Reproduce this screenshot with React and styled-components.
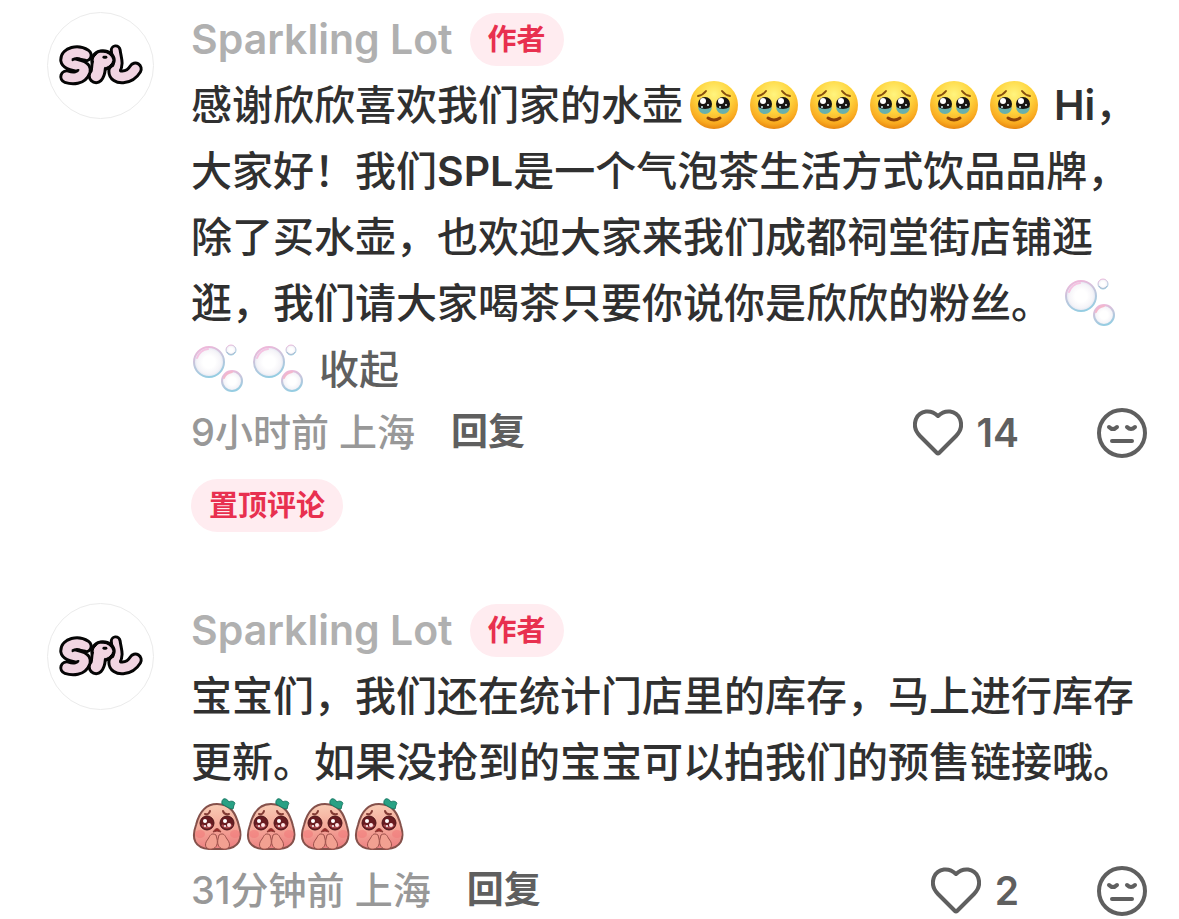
import React from "react";
import styled, { createGlobalStyle } from "styled-components";

const GlobalStyle = createGlobalStyle`
  * { box-sizing: border-box; }
  body {
    margin: 0;
    background: #fff;
    color: #303030;
    font-family: Inter, "Noto Sans CJK SC", sans-serif;
    font-weight: 500;
  }
`;

const Page = styled.main`
  display: flex;
  flex-direction: column;
  gap: 71px;
  padding: 12px 32px 0 47px;
`;

const Comment = styled.article`
  display: grid;
  grid-template-columns: 107px minmax(0, 1fr);
  column-gap: 37px;
  align-items: start;
`;

const Avatar = styled.a`
  display: block;
  height: 107px;
  border: 1px solid #ebebeb;
  border-radius: 50%;
  overflow: hidden;
  svg { display: block; width: 105px; height: 105px; }
`;

const Header = styled.header`
  display: flex;
  align-items: center;
  gap: 17px;
  height: 54px;
  margin-bottom: 6px;
`;

const UserName = styled.a`
  color: #b0b0b0;
  font-size: 41px;
  font-weight: 600;
  line-height: 54px;
  text-decoration: none;
`;

const Tag = styled.span`
  display: inline-block;
  padding: 0 18px;
  border-radius: 27px;
  background: #ffecf0;
  color: #e8304f;
  font-size: 29px;
  font-weight: 700;
  line-height: 53px;
`;

const Body = styled.p`
  margin: 0;
  font-size: 41px;
  line-height: 66px;
`;

const Latin = styled.span`
  font-weight: 600;
`;

const TextButton = styled.button`
  padding: 0;
  border: 0;
  background: none;
  color: #5f5f5f;
  font: inherit;
  font-size: ${(p) => p.$size};
  font-weight: ${(p) => p.$weight};
  cursor: pointer;
`;

const Collapse = styled(TextButton)`
  margin-left: 8px;
`;

const Footer = styled.footer`
  display: flex;
  align-items: center;
  height: 58px;
  color: #5f5f5f;
`;

const MetaGroup = styled.div`
  display: flex;
  align-items: center;
  gap: 36px;
  padding-bottom: 6px;
`;

const Meta = styled.span`
  color: #989898;
  font-size: 38px;
`;

const Actions = styled.div`
  display: flex;
  align-items: center;
  gap: 78px;
  margin-left: auto;
  padding-top: 2px;
`;

const IconButton = styled.button`
  display: flex;
  align-items: center;
  gap: 14px;
  padding: 0;
  border: 0;
  background: none;
  color: inherit;
  font: inherit;
  font-size: 39px;
  font-weight: 600;
  line-height: 50px;
  cursor: pointer;
  svg { display: block; }
`;

const Pinned = styled.div`
  display: flex;
  margin-top: 18px;
`;

const Emoji = styled.svg`
  width: ${(p) => p.$width};
  height: 56px;
  vertical-align: ${(p) => p.$drop || "-14px"};
`;

function Logo() {
  const s = "M38 43 C30 38 19 41 19 48 C20 54 38 52 37 59 C34 67 25 67 19 65";
  const l = "M69 38 C70 46 73 52 69 58";
  const foot = "M68 59 C68 68 83 67 89 57";
  const stem = "M49 64 C53 60 50 52 54 46";
  return (
    <svg viewBox="0 0 107 107" aria-hidden="true">
      <g fill="none" strokeLinecap="round" strokeLinejoin="round">
        <g stroke="#050505">
          <path d={l} strokeWidth="12" />
          <path d={foot} strokeWidth="15" />
        </g>
        <g stroke="#f1d5e2">
          <path d={l} strokeWidth="6" />
          <path d={foot} strokeWidth="9" />
        </g>
        <g stroke="#050505">
          <path d={stem} strokeWidth="17" />
          <ellipse cx="56" cy="48" rx="12" ry="10" strokeWidth="2" fill="#050505" />
          <path d={s} strokeWidth="15" />
        </g>
        <g stroke="#f1d5e2">
          <path d={stem} strokeWidth="11" />
          <ellipse cx="56" cy="48" rx="9" ry="7" fill="#f1d5e2" strokeWidth="1" />
          <path d={s} strokeWidth="9" />
        </g>
        <g stroke="#050505">
          <path d="M57 45 L59 45" strokeWidth="3" />
          <path d="M39 48 C34 47 29 45 25 48" strokeWidth="2" />
          <path d="M19 59 C24 60 28 60 31 58" strokeWidth="2" />
        </g>
      </g>
    </svg>
  );
}

function TearyFace() {
  return (
    <Emoji $width="60px" viewBox="0 0 60 56" role="img" aria-label="感动">
      <defs>
        <radialGradient id="face" cx="50%" cy="28%" r="72%">
          <stop offset="0" stopColor="#fff47e" />
          <stop offset="0.5" stopColor="#ffd53f" />
          <stop offset="0.85" stopColor="#f9a91f" />
          <stop offset="1" stopColor="#e68612" />
        </radialGradient>
      </defs>
      <circle cx="31" cy="27" r="24" fill="url(#face)" />
      <g fill="none" stroke="#87500f" strokeWidth="2" strokeLinecap="round">
        <path d="M15 18 Q20 17 23 13" />
        <path d="M47 18 Q42 17 39 13" />
        <path d="M25 40 Q31 44 37 40" stroke="#8c4308" strokeWidth="3" />
      </g>
      {[22, 40].map((x) => (
        <g key={x}>
          <circle cx={x} cy="26" r="7" fill="#171412" />
          <path d={`M${x - 7} 29 Q${x} 33 ${x + 7} 29 Q${x + 6} 36 ${x} 36 Q${x - 6} 36 ${x - 7} 29`} fill="#68b0ac" />
          <circle cx={x - 2} cy="23" r="3" fill="#fff" />
          <circle cx={x + 3} cy="27" r="1" fill="#e8f6f8" />
          <circle cx={x - 3} cy="29" r="1" fill="#d4eff3" />
        </g>
      ))}
    </Emoji>
  );
}

function Bubbles() {
  return (
    <Emoji $width="60px" viewBox="0 0 60 56" role="img" aria-label="泡泡">
      <defs>
        <linearGradient id="rim" x1="0.3" y1="0" x2="0.6" y2="1">
          <stop offset="0" stopColor="#f0b7da" />
          <stop offset="0.45" stopColor="#c3c6dc" />
          <stop offset="1" stopColor="#94cde2" />
        </linearGradient>
        <radialGradient id="film">
          <stop offset="0.4" stopColor="#fff" />
          <stop offset="0.8" stopColor="#f5f4f8" />
          <stop offset="1" stopColor="#dfe4f0" />
        </radialGradient>
      </defs>
      <g fill="url(#film)" stroke="url(#rim)">
        <circle cx="18" cy="20" r="15" strokeWidth="2" />
        <circle cx="41" cy="39" r="10" strokeWidth="2" />
        <circle cx="40" cy="8" r="5" strokeWidth="1" />
      </g>
      <path d="M6 16 Q9 8 17 7" fill="none" stroke="#f5c3e2" strokeWidth="2" strokeLinecap="round" />
      <path d="M33 36 Q35 31 41 30" fill="none" stroke="#f4b7cb" strokeWidth="2" strokeLinecap="round" />
      <path d="M36 10 Q40 15 44 10" fill="none" stroke="#abbdd2" strokeWidth="1" />
    </Emoji>
  );
}

function PeachFace() {
  return (
    <Emoji $width="54px" $drop="-10px" viewBox="0 0 54 56" role="img" aria-label="拜托">
      <defs>
        <linearGradient id="peach" x1="0.4" y1="0" x2="0.5" y2="1">
          <stop offset="0" stopColor="#f8ccb5" />
          <stop offset="0.5" stopColor="#f5aa9a" />
          <stop offset="1" stopColor="#ec7e80" />
        </linearGradient>
      </defs>
      <path d="M26 7 C14 7 8 16 5 28 C0 42 4 51 18 52 H34 C48 51 52 42 48 29 C45 17 40 7 26 7Z" fill="url(#peach)" stroke="#85514b" strokeWidth="2" />
      <path d="M31 7 C30 1 35 0 38 5 C40 3 46 5 43 8 L42 12 C38 12 35 9 31 7Z" fill="#28a184" stroke="#197964" strokeWidth="1" />
      <ellipse cx="9" cy="37" rx="5" ry="4" fill="#f27c7b" opacity="0.6" />
      <ellipse cx="44" cy="37" rx="5" ry="4" fill="#f27c7b" opacity="0.6" />
      <g fill="none" stroke="#823a33" strokeWidth="2" strokeLinecap="round">
        <path d="M14 17 Q18 18 19 14" />
        <path d="M38 17 Q33 18 32 14" />
      </g>
      {[16, 36].map((x) => (
        <g key={x}>
          <circle cx={x} cy="26" r="7" fill="#681c21" stroke="#4c1519" strokeWidth="1" />
          <path d={`M${x - 5} 28 Q${x} 33 ${x + 5} 28`} fill="none" stroke="#a94b50" strokeWidth="2" />
          <circle cx={x - 2} cy="24" r="2" fill="#fff" />
          <circle cx={x + 2} cy="28" r="2" fill="#ffe5e5" />
          <circle cx={x - 2} cy="29" r="1" fill="#fff" />
        </g>
      ))}
      <path d="M22 35 Q26 28 30 35 Q26 33 22 35Z" fill="#9d2929" stroke="#8c3934" strokeWidth="1" />
      <path d="M25 38 C20 35 19 39 17 42 C12 48 15 53 21 52 C26 51 27 46 26 42Z" fill="#f2a091" stroke="#9b504a" strokeWidth="1" />
      <path d="M28 38 C33 35 34 39 36 42 C41 48 38 53 32 52 C27 51 26 46 27 42Z" fill="#f2a091" stroke="#9b504a" strokeWidth="1" />
    </Emoji>
  );
}

function Heart() {
  return (
    <svg width="50" height="48" viewBox="0 0 50 48" fill="none" stroke="currentColor" strokeWidth="4" strokeLinejoin="round" aria-hidden="true">
      <path d="M25 7 C18 0 7 1 3 10 C0 18 3 23 7 27 L24 44 Q25 45 26 44 L43 27 C47 23 50 18 47 10 C43 1 32 0 25 7Z" />
    </svg>
  );
}

function Dislike() {
  return (
    <svg width="50" height="50" viewBox="0 0 50 50" fill="none" stroke="currentColor" strokeWidth="4" strokeLinecap="round" aria-hidden="true">
      <circle cx="25" cy="25" r="23" />
      <path d="M12 19 Q16 23 20 19 M30 19 Q34 23 38 19" />
      <path d="M15 33 H35" />
    </svg>
  );
}

const times = (n, Item) => Array.from({ length: n }, (_, i) => <Item key={i} />);

function CommentItem({ meta, likes, pinned, children }) {
  return (
    <Comment>
      <Avatar href="#profile" aria-label="Sparkling Lot">
        <Logo />
      </Avatar>
      <div>
        <Header>
          <UserName href="#profile">Sparkling Lot</UserName>
          <Tag>作者</Tag>
        </Header>
        <Body>{children}</Body>
        <Footer>
          <MetaGroup>
            <Meta>{meta}</Meta>
            <TextButton type="button" $size="37px" $weight={700}>回复</TextButton>
          </MetaGroup>
          <Actions>
            <IconButton type="button">
              <Heart />
              {likes}
            </IconButton>
            <IconButton type="button" aria-label="不喜欢">
              <Dislike />
            </IconButton>
          </Actions>
        </Footer>
        {pinned && (
          <Pinned>
            <Tag>置顶评论</Tag>
          </Pinned>
        )}
      </div>
    </Comment>
  );
}

export default function App() {
  return (
    <>
      <GlobalStyle />
      <Page lang="zh-CN">
        <CommentItem meta="9小时前 上海" likes={14} pinned>
          感谢欣欣喜欢我们家的水壶{times(6, TearyFace)} <Latin>Hi</Latin>，大家好！我们<Latin>SPL</Latin>是一个气泡茶生活方式饮品品牌，除了买水壶，也欢迎大家来我们成都祠堂街店铺逛逛，我们请大家喝茶只要你说你是欣欣的粉丝。 {times(3, Bubbles)}
          <Collapse type="button" $size="40px" $weight={500}>收起</Collapse>
        </CommentItem>
        <CommentItem meta="31分钟前 上海" likes={2}>
          宝宝们，我们还在统计门店里的库存，马上进行库存更新。如果没抢到的宝宝可以拍我们的预售链接哦。{times(4, PeachFace)}
        </CommentItem>
      </Page>
    </>
  );
}
